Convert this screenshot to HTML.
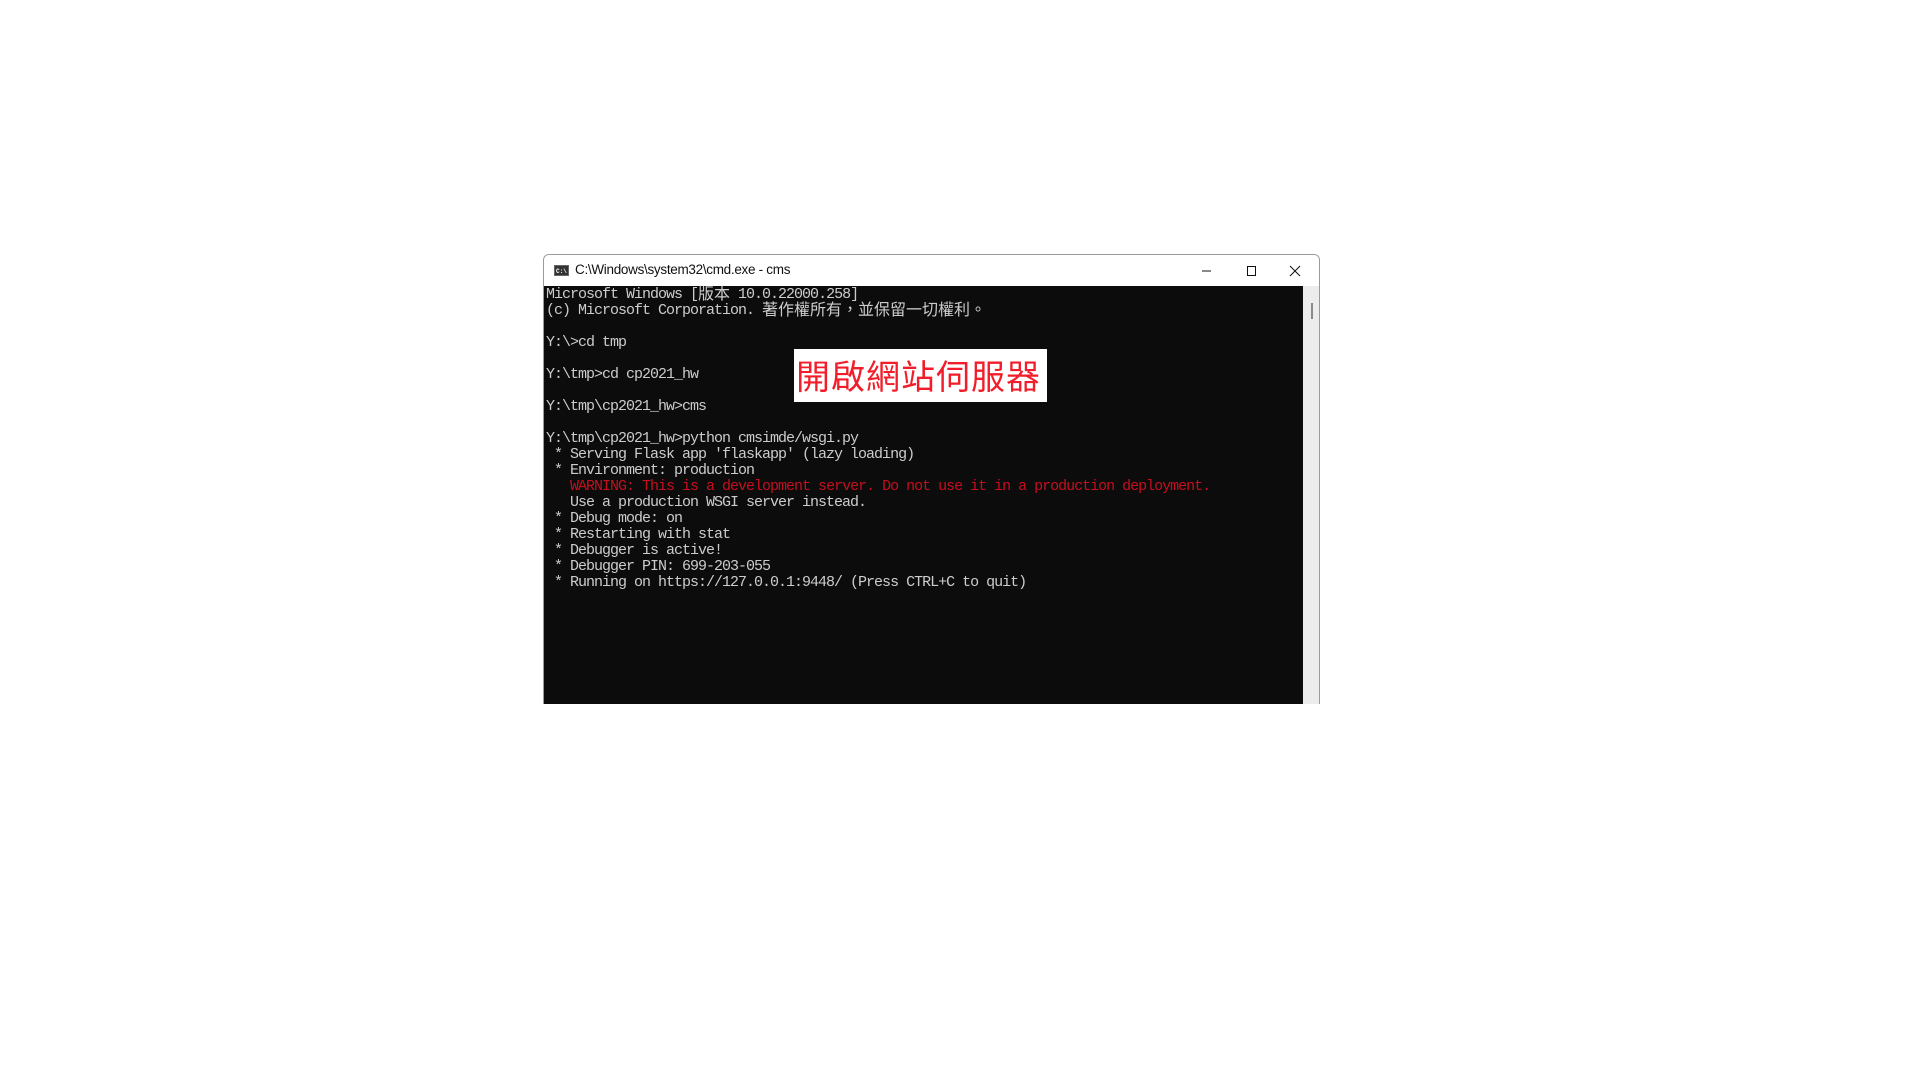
<!DOCTYPE html>
<html><head><meta charset="utf-8"><style>
html,body{margin:0;padding:0;width:1920px;height:1080px;background:#fff;overflow:hidden}
.win{position:absolute;left:543px;top:254px;width:775px;height:449px;border:1px solid #9a9a9a;border-bottom:none;border-radius:6px 6px 0 0;background:#fff;overflow:hidden}
.title{position:absolute;left:0;top:0;width:776px;height:31px;background:#fff}
.title .t{position:absolute;left:31px;top:7px;font:13.5px "Liberation Sans",sans-serif;color:#111;letter-spacing:-0.3px}
.ico{position:absolute;left:10px;top:10px;width:15px;height:11px;background:#333;border:1px solid #666;box-sizing:border-box}
.ico i{position:absolute;left:1px;top:2px;font:bold 6px "Liberation Mono",monospace;color:#fff;font-style:normal}
.console{position:absolute;left:0;top:31px;width:759px;height:418px;background:#0c0c0c}
.sb{position:absolute;left:759px;top:31px;width:16px;height:418px;background:#ececec}
.thumb{position:absolute;left:8px;top:17px;width:2px;height:16px;background:#8a8a8a}
pre{margin:0;position:absolute;left:2px;top:1px;font:15px/16px "Liberation Mono","Noto Sans CJK TC",monospace;letter-spacing:-1px;color:#cccccc;white-space:pre}
pre .c{font-size:16px;letter-spacing:0;line-height:16px;vertical-align:top}
.r{color:#c50f1f}
.lbl{position:absolute;left:794px;top:349px;width:253px;height:53px;background:#fff}
.lbl span{position:absolute;left:2px;top:5px;font:34px/42px "Noto Sans CJK TC","WenQuanYi Zen Hei",sans-serif;color:#f21d2a;letter-spacing:1px;white-space:nowrap}
</style></head><body>
<div class="win">
 <div class="title"><div class="ico"><i>C:\</i></div><div class="t">C:\Windows\system32\cmd.exe - cms</div>
  <svg style="position:absolute;left:655px;top:8px" width="115" height="16">
   <line x1="3" y1="8" x2="12" y2="8" stroke="#111" stroke-width="1"/>
   <rect x="48.5" y="3.5" width="8" height="9" fill="none" stroke="#111" stroke-width="1"/>
   <path d="M91 3 L101 13 M101 3 L91 13" stroke="#111" stroke-width="1"/>
  </svg>
 </div>
 <div class="console"><pre>Microsoft Windows [<span class="c">版本</span> 10.0.22000.258]
(c) Microsoft Corporation. <span class="c">著作權所有，並保留一切權利。</span>

Y:\>cd tmp

Y:\tmp>cd cp2021_hw

Y:\tmp\cp2021_hw>cms

Y:\tmp\cp2021_hw>python cmsimde/wsgi.py
 * Serving Flask app 'flaskapp' (lazy loading)
 * Environment: production
   <span class="r">WARNING: This is a development server. Do not use it in a production deployment.</span>
   Use a production WSGI server instead.
 * Debug mode: on
 * Restarting with stat
 * Debugger is active!
 * Debugger PIN: 699-203-055
 * Running on https://127.0.0.1:9448/ (Press CTRL+C to quit)</pre></div>
 <div class="sb"><div class="thumb"></div></div>
</div>
<div class="lbl"><span>開啟網站伺服器</span></div>
</body></html>
